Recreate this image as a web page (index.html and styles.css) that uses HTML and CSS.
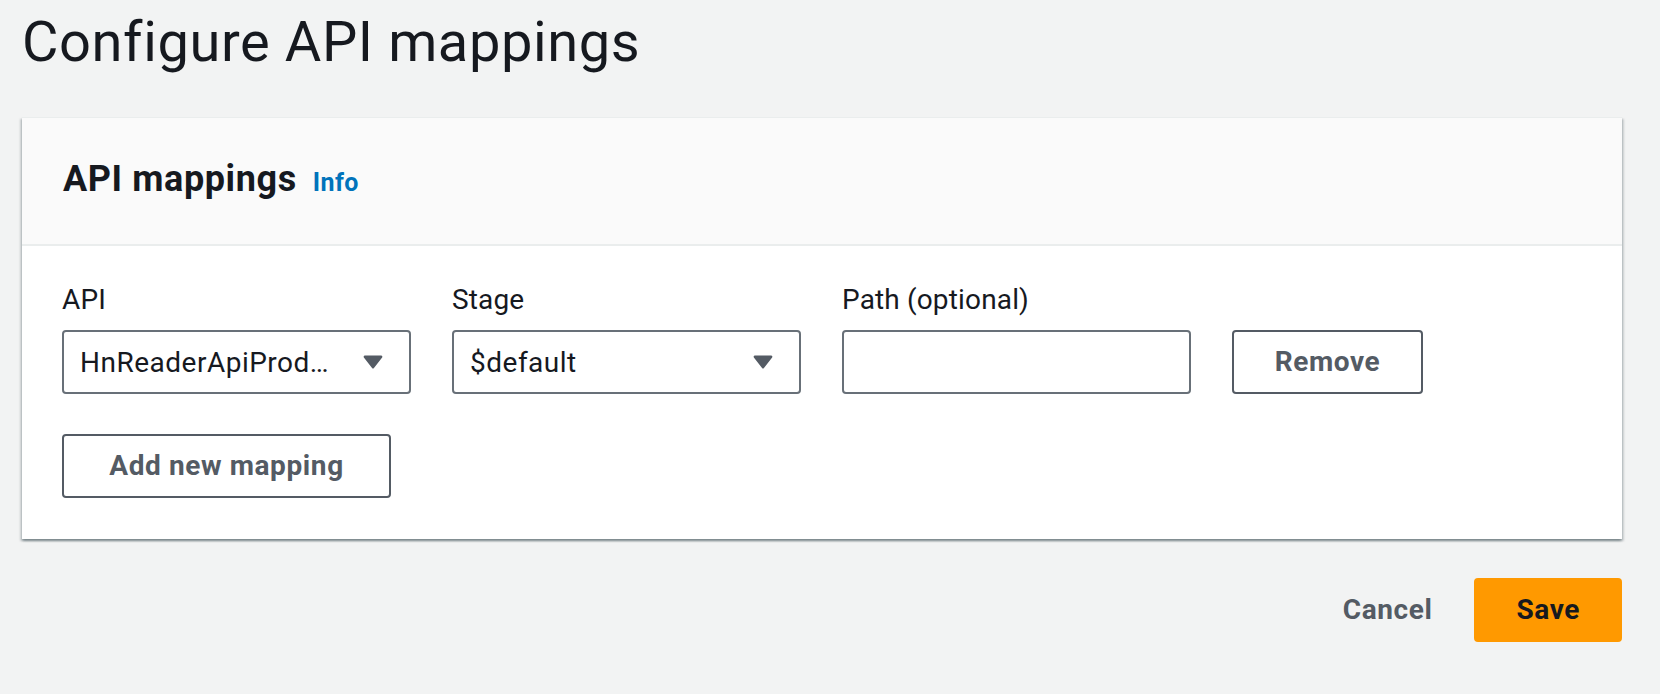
FILE: index.html
```html
<!DOCTYPE html>
<html lang="en">
<head>
<meta charset="utf-8">
<title>Configure API mappings</title>
<link rel="stylesheet" href="styles.css">
</head>
<body>
<div class="page">
  <h1 class="page-title">Configure API mappings</h1>

  <section class="card">
    <header class="card-header">
      <h2 class="card-title">API mappings</h2>
      <a class="info-link" href="#">Info</a>
    </header>
    <div class="card-body">
      <div class="mapping-row">
        <div class="field">
          <label class="field-label">API</label>
          <div class="select">
            <span class="select-value">HnReaderApiProd…</span>
            <svg class="caret" width="20" height="16" viewBox="0 0 20 16"><path d="M1.8 1.5h16.4a1.2 1.2 0 0 1 .95 1.9l-8.2 10.6a1.2 1.2 0 0 1-1.9 0L.85 3.4A1.2 1.2 0 0 1 1.8 1.5z" fill="#545b64"/></svg>
          </div>
        </div>
        <div class="field">
          <label class="field-label">Stage</label>
          <div class="select">
            <span class="select-value">$default</span>
            <svg class="caret" width="20" height="16" viewBox="0 0 20 16"><path d="M1.8 1.5h16.4a1.2 1.2 0 0 1 .95 1.9l-8.2 10.6a1.2 1.2 0 0 1-1.9 0L.85 3.4A1.2 1.2 0 0 1 1.8 1.5z" fill="#545b64"/></svg>
          </div>
        </div>
        <div class="field">
          <label class="field-label">Path (optional)</label>
          <input class="text-input" type="text">
        </div>
        <button class="btn btn-normal">Remove</button>
      </div>
      <button class="btn btn-normal btn-add">Add new mapping</button>
    </div>
  </section>

  <div class="actions">
    <button class="btn btn-link">Cancel</button>
    <button class="btn btn-primary">Save</button>
  </div>
</div>
</body>
</html>
```

FILE: styles.css
```css
* { box-sizing: border-box; }

html, body {
  margin: 0;
  padding: 0;
  background: #f2f3f3;
  font-family: Roboto, "Noto Sans", Arial, sans-serif;
  color: #16191f;
}

.page {
  padding: 6px 38px 0 22px;
}

.page-title {
  margin: 0;
  font-size: 56px;
  line-height: 72px;
  font-weight: 400;
  letter-spacing: 0.6px;
  color: #16191f;
}

.card {
  margin-top: 39px;
  background: #ffffff;
  border-top: 1px solid #eaeded;
  box-shadow: 0 2px 2px 0 rgba(0, 28, 36, 0.3),
              2px 2px 2px 0 rgba(0, 28, 36, 0.15),
              -2px 2px 2px 0 rgba(0, 28, 36, 0.15);
}

.card-header {
  display: flex;
  align-items: baseline;
  gap: 16px;
  background: #fafafa;
  padding: 39px 41px 43px;
  border-bottom: 2px solid #eaeded;
}

.card-title {
  margin: 0;
  font-size: 36px;
  line-height: 44px;
  font-weight: 700;
  letter-spacing: 0.6px;
  color: #16191f;
}

.info-link {
  font-size: 25px;
  font-weight: 700;
  letter-spacing: 0.4px;
  color: #0073bb;
  text-decoration: none;
}

.card-body {
  padding: 34px 40px 41px;
}

.mapping-row {
  display: grid;
  grid-template-columns: 349px 349px 349px 191px;
  column-gap: 41px;
  align-items: end;
  margin-bottom: 40px;
}

.field {
  display: flex;
  flex-direction: column;
}

.field-label {
  font-size: 28px;
  line-height: 40px;
  letter-spacing: 0.15px;
  color: #16191f;
  margin-bottom: 10px;
}

.select {
  display: flex;
  align-items: center;
  justify-content: space-between;
  height: 64px;
  padding: 0 26px 0 16px;
  border: 2px solid #687078;
  border-radius: 4px;
  background: #ffffff;
}

.select-value {
  font-size: 28px;
  letter-spacing: 0.5px;
  color: #16191f;
  white-space: nowrap;
}

.caret {
  display: block;
}

.text-input {
  height: 64px;
  padding: 0 16px;
  border: 2px solid #687078;
  border-radius: 4px;
  background: #ffffff;
  font-family: inherit;
  font-size: 28px;
  color: #16191f;
}

.btn {
  font-family: inherit;
  font-size: 28px;
  line-height: 44px;
  font-weight: 700;
  letter-spacing: 0.6px;
  padding: 8px 40px;
  border-radius: 4px;
  cursor: pointer;
}

.btn-normal {
  background: #ffffff;
  color: #545b64;
  border: 2px solid #545b64;
}

.btn-add {
  min-width: 329px;
}

.actions {
  display: flex;
  justify-content: flex-end;
  align-items: center;
  gap: 18px;
  margin-top: 39px;
}

.btn-link {
  background: transparent;
  border: 2px solid transparent;
  color: #545b64;
  padding: 8px 22px;
}

.btn-primary {
  background: #ff9900;
  border: 2px solid #ff9900;
  color: #16191f;
  padding: 8px 40px;
  min-width: 146px;
}
```
